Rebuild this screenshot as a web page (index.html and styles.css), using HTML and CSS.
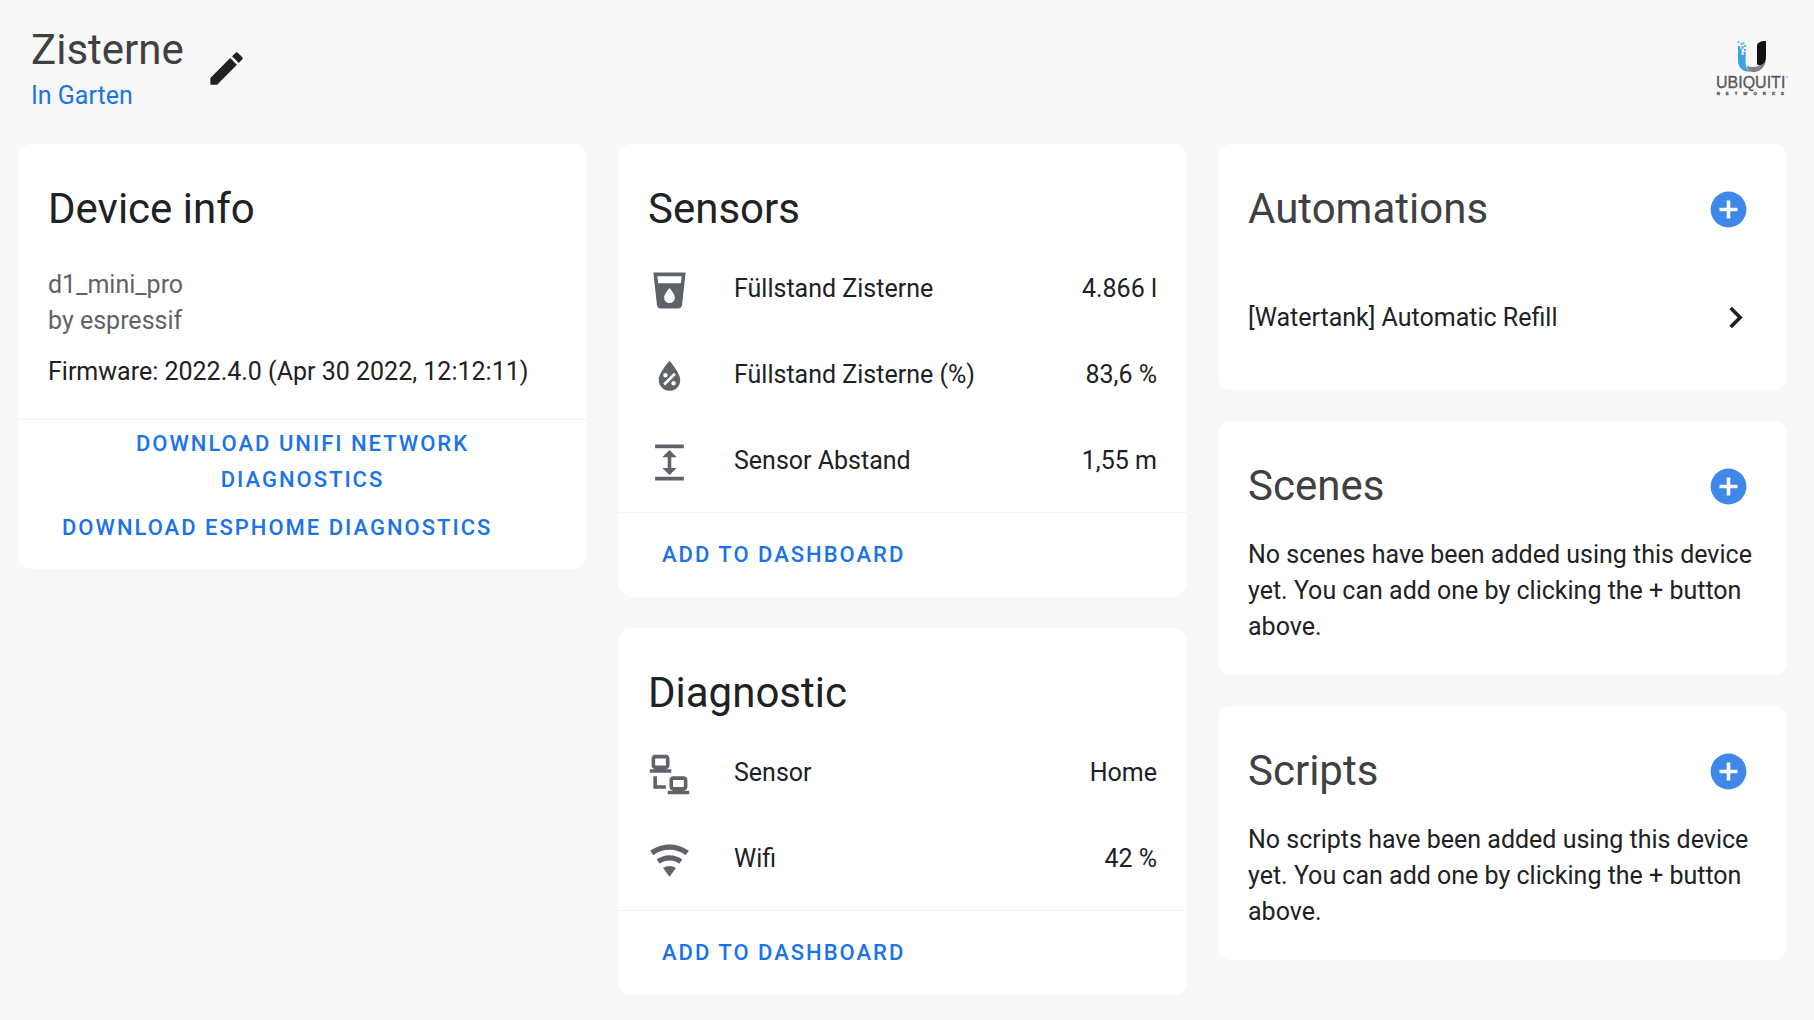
FILE: index.html
```html
<!DOCTYPE html>
<html lang="en">
<head>
<meta charset="utf-8">
<meta name="viewport" content="width=device-width, initial-scale=1">
<title>Zisterne</title>
<link rel="stylesheet" href="styles.css">
</head>
<body>
<header class="page-header">
  <div class="device-name">
    <h1>Zisterne</h1>
    <a href="#garten">In Garten</a>
  </div>
  <button class="icon-button" type="button" aria-label="Edit device">
    <svg class="icon" viewBox="0 0 24 24"><path d="M20.71,7.04C21.1,6.65 21.1,6 20.71,5.63L18.37,3.29C18,2.9 17.35,2.9 16.96,3.29L15.12,5.12L18.87,8.87M3,17.25V21H6.75L17.81,9.93L14.06,6.18L3,17.25Z"/></svg>
  </button>
  <svg class="logo" viewBox="75 60 216 168" role="img" aria-label="Ubiquiti Networks">
    <path class="logo-blue" d="M144 78h7v8h4v19h6v-9h6v33c0 13 7 21 18 26-24 3-41-11-41-32zM143 64h5v5h-5zM152 70h5v5h-5zM158 67h5v5h-5zM163 75h5v6h-5zM155 79h6v7h-6zM162 87h5v6h-5z"/>
    <path class="logo-black" d="M201 79c0-12 10-16 27-16v48c0 13-5 20-13 25-7 2-14 0-14-6z"/>
    <path class="logo-gray" d="M170 137c17 8 41 4 57-12-4 19-19 31-38 31-8 0-15-8-19-19z"/>
    <text class="logo-name" x="78" y="203">UBIQUITI</text>
    <text class="logo-sub" x="80" y="224">NETWORKS</text>
    <circle class="logo-gray" cx="291" cy="171" r="2"/>
  </svg>
</header>

<main class="columns">
  <div class="column">
    <section class="card">
      <div class="card-header"><h2>Device info</h2></div>
      <div class="card-content device-info">
        <div class="model">d1_mini_pro<br>by espressif</div>
        <div>Firmware: 2022.4.0 (Apr 30 2022, 12:12:11)</div>
      </div>
      <div class="card-actions stacked">
        <button class="text-button" type="button">Download UniFi Network diagnostics</button>
        <button class="text-button" type="button">Download ESPHome diagnostics</button>
      </div>
    </section>
  </div>

  <div class="column">
    <section class="card">
      <div class="card-header"><h2>Sensors</h2></div>
      <ul class="entities">
        <li>
          <svg class="icon" viewBox="0 0 24 24"><path d="M18.32,8H5.67L5.23,4H18.77M12,19A3,3 0 0,1 9,16C9,14 12,10.6 12,10.6C12,10.6 15,14 15,16A3,3 0 0,1 12,19M3,2L5,20.23C5.13,21.23 5.97,22 7,22H17C18,22 18.87,21.23 19,20.23L21,2H3Z"/></svg>
          <span class="name">Füllstand Zisterne</span><span>4.866 l</span>
        </li>
        <li>
          <svg class="icon" viewBox="0 0 24 24"><path d="M12,3.25C12,3.25 6,10 6,14C6,17.32 8.69,20 12,20A6,6 0 0,0 18,14C18,10 12,3.25 12,3.25M14.47,9.97L15.53,11.03L9.53,17.03L8.47,15.97M9.75,10A1.25,1.25 0 0,1 11,11.25A1.25,1.25 0 0,1 9.75,12.5A1.25,1.25 0 0,1 8.5,11.25A1.25,1.25 0 0,1 9.75,10M14.25,14.5A1.25,1.25 0 0,1 15.5,15.75A1.25,1.25 0 0,1 14.25,17A1.25,1.25 0 0,1 13,15.75A1.25,1.25 0 0,1 14.25,14.5Z"/></svg>
          <span class="name">Füllstand Zisterne (%)</span><span>83,6 %</span>
        </li>
        <li>
          <svg class="icon" viewBox="0 0 24 24"><path d="M13,9V15H16L12,19L8,15H11V9H8L12,5L16,9H13M4,2H20V4H4V2M4,20H20V22H4V20Z"/></svg>
          <span class="name">Sensor Abstand</span><span>1,55 m</span>
        </li>
      </ul>
      <div class="card-actions">
        <button class="text-button" type="button">Add to dashboard</button>
      </div>
    </section>

    <section class="card">
      <div class="card-header"><h2>Diagnostic</h2></div>
      <ul class="entities">
        <li>
          <svg class="icon" viewBox="0 0 24 24"><path d="M4,1C2.89,1 2,1.89 2,3V7C2,8.11 2.89,9 4,9H1V11H13V9H10C11.11,9 12,8.11 12,7V3C12,1.89 11.11,1 10,1H4M4,3H10V7H4V3M3,13V18L3,20H10V18H5V13H3M14,13C12.89,13 12,13.89 12,15V19C12,20.11 12.89,21 14,21H11V23H23V21H20C21.11,21 22,20.11 22,19V15C22,13.89 21.11,13 20,13H14M14,15H20V19H14V15Z"/></svg>
          <span class="name">Sensor</span><span>Home</span>
        </li>
        <li>
          <svg class="icon" viewBox="0 0 24 24"><path d="M12,21L15.6,16.2C14.6,15.45 13.35,15 12,15C10.65,15 9.4,15.45 8.4,16.2L12,21M12,3C7.95,3 4.21,4.34 1.2,6.6L3,9C5.5,7.12 8.62,6 12,6C15.38,6 18.5,7.12 21,9L22.8,6.6C19.79,4.34 16.05,3 12,3M12,9C9.3,9 6.81,9.89 4.8,11.4L6.6,13.8C8.1,12.67 9.97,12 12,12C14.03,12 15.9,12.67 17.4,13.8L19.2,11.4C17.19,9.89 14.7,9 12,9Z"/></svg>
          <span class="name">Wifi</span><span>42 %</span>
        </li>
      </ul>
      <div class="card-actions">
        <button class="text-button" type="button">Add to dashboard</button>
      </div>
    </section>
  </div>

  <div class="column">
    <section class="card">
      <div class="card-header related">
        <h2>Automations</h2>
        <button class="icon-button add" type="button" aria-label="Add automation">
          <svg class="icon" viewBox="0 0 24 24"><path d="M17,13H13V17H11V13H7V11H11V7H13V11H17M12,2A10,10 0 0,0 2,12A10,10 0 0,0 12,22A10,10 0 0,0 22,12A10,10 0 0,0 12,2Z"/></svg>
        </button>
      </div>
      <a class="list-link" href="#watertank">
        <span>[Watertank] Automatic Refill</span>
        <svg class="icon" viewBox="0 0 24 24"><path d="M8.59,16.58L13.17,12L8.59,7.41L10,6L16,12L10,18L8.59,16.58Z"/></svg>
      </a>
    </section>

    <section class="card">
      <div class="card-header related">
        <h2>Scenes</h2>
        <button class="icon-button add" type="button" aria-label="Add scene">
          <svg class="icon" viewBox="0 0 24 24"><path d="M17,13H13V17H11V13H7V11H11V7H13V11H17M12,2A10,10 0 0,0 2,12A10,10 0 0,0 12,22A10,10 0 0,0 22,12A10,10 0 0,0 12,2Z"/></svg>
        </button>
      </div>
      <p class="card-content">No scenes have been added using this device yet. You can add one by clicking the + button above.</p>
    </section>

    <section class="card">
      <div class="card-header related">
        <h2>Scripts</h2>
        <button class="icon-button add" type="button" aria-label="Add script">
          <svg class="icon" viewBox="0 0 24 24"><path d="M17,13H13V17H11V13H7V11H11V7H13V11H17M12,2A10,10 0 0,0 2,12A10,10 0 0,0 12,22A10,10 0 0,0 22,12A10,10 0 0,0 12,2Z"/></svg>
        </button>
      </div>
      <p class="card-content">No scripts have been added using this device yet. You can add one by clicking the + button above.</p>
    </section>
  </div>
</main>
</body>
</html>
```
FILE: styles.css
```css
* {
  box-sizing: border-box;
}

body {
  margin: 0;
  background: #f8f8f8;
  color: #202124;
  font-family: Roboto, sans-serif;
  font-size: 25px;
  line-height: 36px;
}

h1,
h2,
p,
ul {
  margin: 0;
  padding: 0;
}

h1,
h2 {
  font-size: 42px;
  font-weight: 400;
}

a {
  color: #1a73e8;
  text-decoration: none;
}

.icon {
  display: block;
  flex: none;
  width: 43px;
  height: 43px;
  fill: currentColor;
}

.icon-button {
  display: flex;
  flex: none;
  align-items: center;
  justify-content: center;
  width: 86px;
  height: 86px;
  padding: 0;
  border: 0;
  background: none;
  color: inherit;
  cursor: pointer;
}

.page-header {
  display: flex;
  align-items: center;
  padding: 22px 27px 30px 31px;
}

.device-name a {
  display: block;
}

h1 {
  color: #3f4042;
  line-height: 56px;
}

.logo {
  width: 72px;
  height: 56px;
  margin-left: auto;
  overflow: visible;
}

.logo-blue {
  fill: #3fa3e0;
}

.logo-black {
  fill: #111;
}

.logo-gray {
  fill: #808184;
}

.logo-name,
.logo-sub {
  fill: #58595b;
  stroke: #58595b;
  stroke-width: 1px;
  font-family: "Liberation Sans", Arial, sans-serif;
  font-size: 48px;
}

.logo-sub {
  font-size: 13px;
  font-weight: 700;
  letter-spacing: 18px;
}

.columns {
  display: grid;
  grid-template-columns: repeat(3, minmax(0, 1fr));
  align-items: start;
  gap: 31px;
  padding: 0 27px 25px 18px;
}

.column {
  display: grid;
  gap: 31px;
}

.card {
  border-radius: 14px;
  background: #fff;
}

.card-header {
  display: flex;
  align-items: center;
  justify-content: space-between;
  padding: 22px 30px 0;
}

.card-header h2 {
  line-height: 86px;
}

.related {
  padding-right: 16px;
}

.related h2 {
  color: #3f4042;
}

.add {
  color: #3f87e8;
}

.card-content {
  padding: 8px 30px 30px;
}

.device-info {
  display: grid;
  gap: 15px;
  padding: 15px 30px 29px;
}

.model {
  color: #5f6368;
}

.entities {
  display: grid;
  gap: 14px;
  padding: 1px 30px 15px;
  list-style: none;
}

.entities li {
  display: flex;
  align-items: center;
  height: 72px;
}

.entities .icon {
  margin: 2px 43px 0 0;
  color: #5f6368;
}

.entities .name {
  flex: 1;
}

.card-actions {
  padding: 12px 30px 13px;
  border-top: 1px solid #f4f4f4;
}

.stacked {
  padding: 6px 30px 12px;
}

.text-button {
  min-height: 59px;
  padding: 0 14px;
  border: 0;
  background: none;
  color: #1a73e8;
  font: 500 22px/36px Roboto, sans-serif;
  letter-spacing: 2px;
  text-transform: uppercase;
  cursor: pointer;
}

.list-link {
  display: flex;
  align-items: center;
  justify-content: space-between;
  height: 131px;
  margin-bottom: 7px;
  padding: 0 30px;
  color: #202124;
}
```
